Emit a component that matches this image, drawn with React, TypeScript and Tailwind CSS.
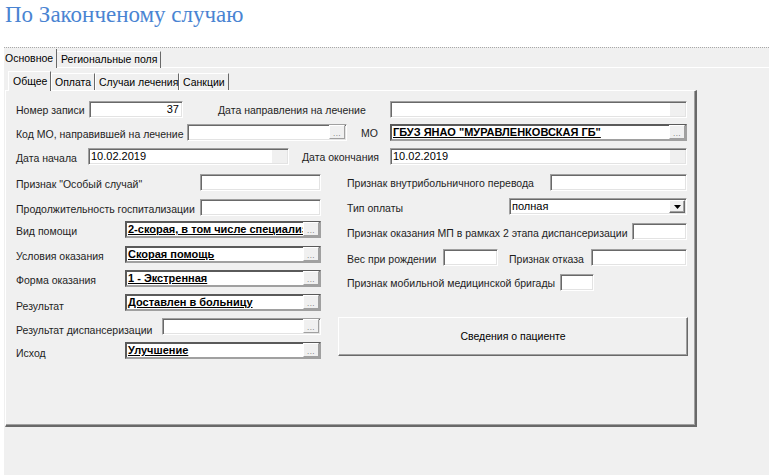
import React from "react";

const sunken =
  "bg-white border border-t-[#a0a0a0] border-l-[#a0a0a0] border-r-white border-b-white shadow-[inset_1px_1px_0_#696969,inset_-1px_-1px_0_#e3e3e3]";
const raised =
  "bg-[#f0f0f0] border border-t-white border-l-white border-r-[#696969] border-b-[#696969] shadow-[inset_-1px_-1px_0_#a0a0a0]";

function Label({ w, children, className = "" }: { w: string; children: React.ReactNode; className?: string }) {
  return <span className={`${w} shrink-0 whitespace-nowrap text-[10.5px] leading-[13px] text-[#1e1e1e] ${className}`}>{children}</span>;
}

function Input({ w, value, right }: { w: string; value?: string; right?: boolean }) {
  return (
    <div className={`${w} h-[17px] shrink-0 flex items-center px-[3px] text-[11px] leading-[13px] text-black ${sunken} ${right ? "justify-end" : ""}`}>
      {value}
    </div>
  );
}

function DateInput({ w, value }: { w: string; value?: string }) {
  return (
    <div className={`${w} h-[17px] shrink-0 flex ${sunken}`}>
      <span className="flex-1 pl-[2px] text-[11px] leading-[15px] text-black">{value}</span>
      <span className="w-[15px] bg-[#f0f0f0] my-[1px] mr-[1px]" />
    </div>
  );
}

function Dots() {
  return (
    <span className="w-[16px] h-[14px] self-end shrink-0 flex items-end justify-center pb-[1px] bg-[#f0f0f0] border border-t-white border-l-white border-r-[#a0a0a0] border-b-[#a0a0a0] text-[8px] leading-[6px] tracking-[0.5px] text-[#6a6a6a]">
      ...
    </span>
  );
}

function Lookup({ w, value }: { w: string; value?: string }) {
  if (!value) {
    return (
      <div className={`${w} h-[17px] shrink-0 flex pr-[1px] pb-[1px] ${sunken}`}>
        <span className="flex-1" />
        <Dots />
      </div>
    );
  }
  return (
    <div className={`${w} h-[17px] shrink-0 flex bg-white border-2 border-t-[#5a5a5a] border-l-[#5a5a5a] border-r-[#a0a0a0] border-b-[#a0a0a0]`}>
      <span className="flex-1 overflow-hidden whitespace-nowrap font-bold underline text-[11px] leading-[12px] text-black pl-[1px]">
        {value}
      </span>
      <Dots />
    </div>
  );
}

function Tab({ label, active, w }: { label: string; active?: boolean; w: string }) {
  return (
    <div
      className={`${w} shrink-0 whitespace-nowrap flex items-center border-t border-l border-t-white border-l-white border-r border-r-[#696969] text-[10.5px] leading-[13px] text-black bg-[#f0f0f0] ${
        active ? "h-[20px] pl-[4px] relative top-[1px] z-10" : "h-[17px] pl-[3px]"
      }`}
    >
      {label}
    </div>
  );
}

export default function App() {
  return (
    <div className="w-[769px] h-[475px] bg-white flex flex-col overflow-hidden font-['Liberation_Sans',Arial,sans-serif]">
      <div className="h-[47px] shrink-0 pl-[5px] pt-[1px]">
        <h1 className="font-['Liberation_Serif','Times_New_Roman',serif] text-[23px] leading-[27px] text-[#4a84d2]">
          По Законченому случаю
        </h1>
      </div>

      <div className="flex-1 ml-[4px] bg-[#f0f0f0] border-t border-dotted border-[#a8a8a8] flex flex-col">
        {/* outer tabs */}
        <div className="h-[20px] flex items-end border-b border-white">
          <div className="flex items-end relative top-[1px]">
            <div className="w-[53px] h-[19px] whitespace-nowrap flex items-center pl-[1px] border-r border-r-[#696969] text-[10.5px] text-black bg-[#f0f0f0]">
              Основное
            </div>
            <div className="w-[104px] h-[17px] whitespace-nowrap flex items-center pl-[4px] border-t border-t-white border-r border-r-[#696969] text-[10.5px] text-black">
              Региональные поля
            </div>
          </div>
        </div>

        {/* inner tabs */}
        <div className="h-[22px] flex items-end pl-[4px]">
          <Tab label="Общее" active w="w-[43px]" />
          <Tab label="Оплата" w="w-[44px]" />
          <Tab label="Случаи лечения" w="w-[84px]" />
          <Tab label="Санкции" w="w-[50px]" />
        </div>

        <div className="ml-[1px] w-[692px] h-[337px] border-t border-l border-t-white border-l-white border-r-2 border-b-2 border-r-[#696969] border-b-[#696969] shadow-[inset_-1px_-1px_0_#a0a0a0] pt-[10px] pl-[10px] flex flex-col">
          {/* row 1 */}
          <div className="flex items-center h-[17px]">
            <Label w="w-[73px]" className="pt-[2px]">Номер записи</Label>
            <Input w="w-[94px]" value="37" right />
            <Label w="w-[172px]" className="ml-[35px] pt-[2px]">Дата направления на лечение</Label>
            <DateInput w="w-[297px]" />
          </div>
          {/* row 2 */}
          <div className="flex items-center h-[17px] mt-[6px]">
            <Label w="w-[171px]" className="pt-[3px]">Код МО, направившей на лечение</Label>
            <Lookup w="w-[160px]" />
            <Label w="w-[29px]" className="ml-[14px] pt-[2px]">МО</Label>
            <Lookup w="w-[297px]" value={'ГБУЗ ЯНАО "МУРАВЛЕНКОВСКАЯ ГБ"'} />
          </div>
          {/* row 3 */}
          <div className="flex items-center h-[17px] mt-[7px]">
            <Label w="w-[72px]" className="pt-[4px]">Дата начала</Label>
            <DateInput w="w-[201px]" value="10.02.2019" />
            <Label w="w-[88px]" className="ml-[13px] pt-[2px]">Дата окончания</Label>
            <DateInput w="w-[297px]" value="10.02.2019" />
          </div>

          <div className="flex mt-[9px]">
            {/* left column */}
            <div className="w-[322px] shrink-0 flex flex-col">
              <div className="flex items-center h-[17px]">
                <Label w="w-[184px]" className="pt-[3px]">Признак "Особый случай"</Label>
                <Input w="w-[121px]" />
              </div>
              <div className="flex items-center h-[17px] mt-[8px]">
                <Label w="w-[184px]" className="pt-[4px]">Продолжительность госпитализации</Label>
                <Input w="w-[121px]" />
              </div>
              <div className="flex items-center h-[17px] mt-[5px]">
                <Label w="w-[109px]" className="pt-[3px]">Вид помощи</Label>
                <Lookup w="w-[196px]" value="2-скорая, в том числе специализированная" />
              </div>
              <div className="flex items-center h-[17px] mt-[8px]">
                <Label w="w-[109px]" className="pt-[3px]">Условия оказания</Label>
                <Lookup w="w-[196px]" value="Скорая помощь" />
              </div>
              <div className="flex items-center h-[17px] mt-[7px]">
                <Label w="w-[109px]" className="pt-[4px]">Форма оказания</Label>
                <Lookup w="w-[196px]" value="1 - Экстренная" />
              </div>
              <div className="flex items-center h-[17px] mt-[7px]">
                <Label w="w-[109px]" className="pt-[7px]">Результат</Label>
                <Lookup w="w-[196px]" value="Доставлен в больницу" />
              </div>
              <div className="flex items-center h-[17px] mt-[7px]">
                <Label w="w-[146px]" className="pt-[7px]">Результат диспансеризации</Label>
                <Lookup w="w-[159px]" />
              </div>
              <div className="flex items-center h-[17px] mt-[7px]">
                <Label w="w-[109px]" className="pt-[6px]">Исход</Label>
                <Lookup w="w-[196px]" value="Улучшение" />
              </div>
            </div>

            {/* right column */}
            <div className="w-[350px] shrink-0 flex flex-col">
              <div className="flex items-center h-[17px] pl-[9px]">
                <Label w="w-[203px]" className="pt-[2px]">Признак внутрибольничного перевода</Label>
                <Input w="w-[137px]" />
              </div>
              <div className="flex items-center h-[17px] pl-[9px] mt-[7px]">
                <Label w="w-[162px]" className="pt-[4px]">Тип оплаты</Label>
                <div className={`w-[178px] h-[17px] shrink-0 flex ${sunken}`}>
                  <span className="flex-1 pl-[2px] text-[11px] leading-[15px] text-black">полная</span>
                  <span className={`w-[16px] h-[13px] mt-[1px] mr-[1px] flex items-center justify-center ${raised}`}>
                    <svg width="7" height="4" viewBox="0 0 7 4">
                      <path d="M0 0h7L3.5 4z" fill="#000" />
                    </svg>
                  </span>
                </div>
              </div>
              <div className="flex items-center h-[17px] pl-[9px] mt-[8px]">
                <Label w="w-[285px]" className="pt-[3px]">Признак оказания МП в рамках 2 этапа диспансеризации</Label>
                <Input w="w-[55px]" />
              </div>
              <div className="flex items-center h-[17px] pl-[9px] mt-[9px]">
                <Label w="w-[96px]" className="pt-[4px]">Вес при рождении</Label>
                <Input w="w-[55px]" />
                <Label w="w-[82px]" className="ml-[11px] pt-[4px]">Признак отказа</Label>
                <Input w="w-[96px]" />
              </div>
              <div className="flex items-center h-[17px] pl-[9px] mt-[8px]">
                <Label w="w-[213px]" className="pt-[2px]">Признак мобильной медицинской бригады</Label>
                <Input w="w-[34px]" />
              </div>
              <button
                className={`mt-[26px] w-[350px] h-[39px] flex items-center justify-center text-[10.5px] text-black ${raised}`}
              >
                Сведения о пациенте
              </button>
            </div>
          </div>
        </div>
      </div>
    </div>
  );
}
